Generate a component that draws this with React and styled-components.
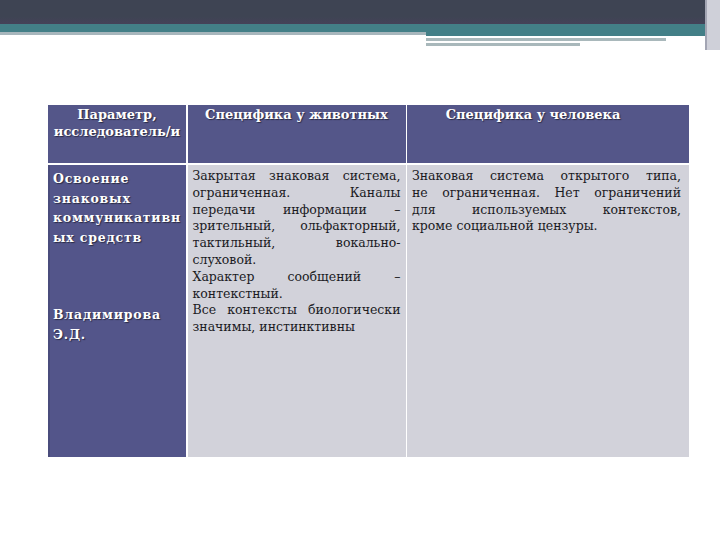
import React from "react";
import styled, { createGlobalStyle } from "styled-components";

const GlobalStyle = createGlobalStyle`
  html, body {
    margin: 0;
    padding: 0;
    background: #ffffff;
  }
  body {
    width: 720px;
    height: 540px;
    overflow: hidden;
    font-family: "DejaVu Serif", "Liberation Serif", serif;
  }
`;

////TOP DECORATION
const Header = styled.div`
  display: flex;
  height: 50px;
`;

const HeaderMain = styled.div`
  flex: 1;
  display: flex;
  flex-direction: column;
`;

const DarkBand = styled.div`
  height: 24px;
  background: linear-gradient(#3e4453 0, #3e4453 70%, #454259 100%);
`;

const TealBand = styled.div`
  height: 8px;
  background: #437f87;
`;

const SubRow = styled.div`
  display: flex;
`;

const LeftRule = styled.div`
  width: 426px;
  height: 3px;
  background: #a7b6bc;
`;

const RightDeco = styled.div`
  flex: 1;
  display: flex;
  flex-direction: column;
`;

const Strip = styled.div`
  width: ${(p) => p.$w || "100%"};
  height: ${(p) => p.$h}px;
  background: ${(p) => p.$c};
  margin-top: ${(p) => p.$mt || 0}px;
`;

const RightEdge = styled.div`
  width: 15px;
  height: 50px;
  background: #cfd0d9;
  border-left: 2px solid #a3a5b3;
  box-sizing: border-box;
`;

////TABLE
const Page = styled.div`
  padding: 55px 31px 0 48px;
`;

const Grid = styled.div`
  display: grid;
  grid-template-columns: 138px 218px 282px;
  grid-template-rows: 58px 292px;
  column-gap: 1.5px;
  row-gap: 2px;
  width: 641px;
  background: #ffffff;
`;

const HeadCell = styled.div`
  background: #545689;
  color: #ffffff;
  font-size: 13px;
  font-weight: bold;
  line-height: 17px;
  text-align: center;
  padding: 1px ${(p) => p.$pr || 0}px 0 0;
  text-shadow: 1px 1px 1px #2a2b45;
  white-space: nowrap;
`;

const SideCell = styled.div`
  background: #53558a;
  color: #ffffff;
  font-size: 12.5px;
  font-weight: bold;
  line-height: 19.5px;
  padding: 4px 0 0 3px;
  letter-spacing: 0.8px;
  text-shadow: 1px 1px 1px #2a2b45;
  border-left: 2px solid #4a4c7c;
  white-space: nowrap;
`;

const Gap = styled.div`
  height: 58px;
`;

const BodyCell = styled.div`
  background: #d2d2da;
  color: #1b1b1f;
  font-size: 12.5px;
  line-height: 16.8px;
  padding: 3px ${(p) => p.$pr || 5}px 0 5px;
`;

const Line = styled.span`
  display: block;
  text-align: justify;
  text-align-last: ${(p) => (p.$last ? "left" : "justify")};
  white-space: nowrap;
`;

const animals = [
  ["Закрытая знаковая система,"],
  ["ограниченная. Каналы"],
  ["передачи информации –"],
  ["зрительный, ольфакторный,"],
  ["тактильный, вокально-"],
  ["слуховой.", true],
  ["Характер сообщений –"],
  ["контекстный.", true],
  ["Все контексты биологически"],
  ["значимы, инстинктивны", true],
];

const humans = [
  ["Знаковая система открытого типа,"],
  ["не ограниченная. Нет ограничений"],
  ["для используемых контекстов,"],
  ["кроме социальной цензуры.", true],
];

const App = () => {
  return (
    <>
      <GlobalStyle />
      <Header>
        <HeaderMain>
          <DarkBand />
          <TealBand />
          <SubRow>
            <LeftRule />
            <RightDeco>
              <Strip $h={4} $c="#437f87" />
              <Strip $h={2} $c="#ffffff" />
              <Strip $w="240px" $h={3} $c="#a9b8bb" />
              <Strip $w="154px" $h={3} $c="#a9b8bb" $mt={2} />
            </RightDeco>
          </SubRow>
        </HeaderMain>
        <RightEdge />
      </Header>

      <Page>
        <Grid>
          <HeadCell>
            Параметр,
            <br />
            исследователь/и
          </HeadCell>
          <HeadCell>Специфика у животных</HeadCell>
          <HeadCell $pr={30}>Специфика у человека</HeadCell>

          <SideCell>
            Освоение
            <br />
            знаковых
            <br />
            коммуникативн
            <br />
            ых средств
            <Gap />
            Владимирова
            <br />
            Э.Д.
          </SideCell>
          <BodyCell>
            {animals.map(([t, last]) => (
              <Line key={t} $last={last}>
                {t}
              </Line>
            ))}
          </BodyCell>
          <BodyCell $pr={8}>
            {humans.map(([t, last]) => (
              <Line key={t} $last={last}>
                {t}
              </Line>
            ))}
          </BodyCell>
        </Grid>
      </Page>
    </>
  );
};

export default App;
